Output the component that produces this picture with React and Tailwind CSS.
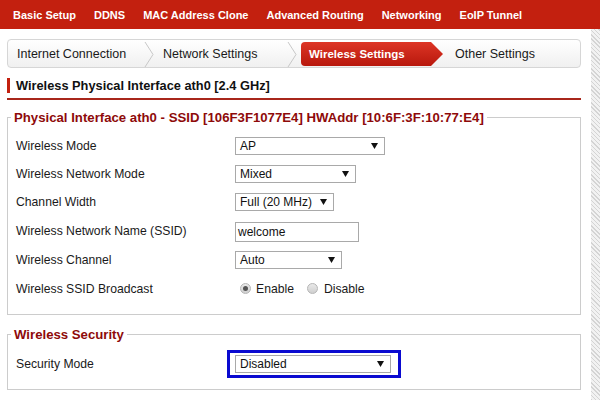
import React from 'react'

const font = { fontFamily: '"Liberation Sans", Arial, sans-serif' }

const menu = ['Basic Setup', 'DDNS', 'MAC Address Clone', 'Advanced Routing', 'Networking', 'EoIP Tunnel']

function Chevron() {
  return (
    <svg width="12" height="27" viewBox="0 0 12 27" className="shrink-0">
      <path d="M2 1 L10 13.5 L2 26" fill="none" stroke="#c8c8c8" strokeWidth="1" />
    </svg>
  )
}

function FakeSelect({ value, width }) {
  return (
    <div
      className="h-[18px] border border-[#a9a9a9] bg-white flex items-center justify-between pl-[4px] pr-[6px] text-[12px] text-[#111]"
      style={{ width }}
    >
      <span>{value}</span>
      <svg width="7" height="6" viewBox="0 0 7 6">
        <path d="M0 0 H7 L3.5 6 Z" fill="#111" />
      </svg>
    </div>
  )
}

function Radio({ checked }) {
  return (
    <span className="w-[11px] h-[11px] rounded-full border border-[#b5b5b5] bg-[linear-gradient(#e9e9e9,#cfcfcf)] flex items-center justify-center">
      {checked && <span className="w-[5px] h-[5px] rounded-full bg-[#555]" />}
    </span>
  )
}

function Row({ label, children, h = 'h-[28px]' }) {
  return (
    <div className={'flex items-center ' + h}>
      <div className="w-[219px] shrink-0 text-[12.2px] text-[#1a1a1a]">{label}</div>
      {children}
    </div>
  )
}

export default function App() {
  return (
    <div className="w-[600px] h-[400px] overflow-hidden bg-white" style={font}>
      {/* top menu */}
      <div className="h-[29px] pt-[1px] bg-[#c3200f] flex items-center pl-[13px] gap-[18px] text-white font-bold text-[11px]">
        {menu.map((m) => (
          <span key={m}>{m}</span>
        ))}
      </div>

      <div className="flex h-[371px]">
        <div className="flex-1 pl-[7px] pr-[10px]">
          {/* wizard steps */}
          <div className="mt-[10px] h-[29px] pt-[1px] rounded-[4px] border border-[#d6d6d6] bg-[linear-gradient(#ffffff,#f0f0f0)] flex items-center text-[12.5px] text-[#1a1a1a]">
            <span className="w-[135px] shrink-0 pl-[9px]">Internet Connection</span>
            <Chevron />
            <span className="w-[131px] shrink-0 pl-[8px]">Network Settings</span>
            <Chevron />
            <div className="ml-[3px] h-[24px] w-[142px] shrink-0 relative">
              <svg width="142" height="24" viewBox="0 0 142 24" className="absolute inset-0">
                <defs>
                  <linearGradient id="rg" x1="0" y1="0" x2="0" y2="1">
                    <stop offset="0" stopColor="#dd3525" />
                    <stop offset="1" stopColor="#b8180d" />
                  </linearGradient>
                </defs>
                <path d="M4 0 H130 L142 12 L130 24 H4 Q0 24 0 20 V4 Q0 0 4 0 Z" fill="url(#rg)" />
              </svg>
              <span className="relative pl-[8px] leading-[24px] text-white font-bold text-[11.5px]">Wireless Settings</span>
            </div>
            <span className="pl-[12px]">Other Settings</span>
          </div>

          {/* section header */}
          <div className="mt-[10px] flex items-center h-[15px]">
            <div className="w-[3px] h-[15px] bg-[#c3200f]" />
            <span className="ml-[6px] mt-[1px] font-bold text-[12.8px] text-[#111]">Wireless Physical Interface ath0 [2.4 GHz]</span>
          </div>
          <div className="mt-[5px] h-[2px] bg-[#a8261b]" />

          {/* physical interface */}
          <fieldset className="mt-[10px] border border-[#cccccc] pl-[8px] pr-[8px] pb-[11px]">
            <legend className="ml-[-5px] px-[3px] font-bold text-[13.2px] text-[#8e0a0a] leading-[15px]">
              Physical Interface ath0 - SSID [106F3F1077E4] HWAddr [10:6F:3F:10:77:E4]
            </legend>
            <div className="pt-[7px]">
              <Row label="Wireless Mode">
                <FakeSelect value="AP" width={150} />
              </Row>
              <Row label="Wireless Network Mode">
                <FakeSelect value="Mixed" width={121} />
              </Row>
              <Row label="Channel Width">
                <FakeSelect value="Full (20 MHz)" width={99} />
              </Row>
              <Row label="Wireless Network Name (SSID)" h="h-[30px] pt-[1px]">
                <div className="w-[124px] h-[20px] border border-[#a9a9a9] bg-white flex items-center pl-[2px] text-[12px] text-[#111]">
                  welcome
                </div>
              </Row>
              <Row label="Wireless Channel" h="h-[28px]">
                <FakeSelect value="Auto" width={107} />
              </Row>
              <Row label="Wireless SSID Broadcast" h="h-[29px] pt-[1px]">
                <div className="flex items-center text-[12.2px] text-[#1a1a1a] pl-[5px]">
                  <Radio checked />
                  <span className="ml-[5px]">Enable</span>
                  <span className="ml-[13px]"><Radio /></span>
                  <span className="ml-[6px]">Disable</span>
                </div>
              </Row>
            </div>
          </fieldset>

          {/* security */}
          <fieldset className="mt-[12px] border border-[#cccccc] pl-[8px] pr-[8px] pb-[11px]">
            <legend className="ml-[-5px] px-[3px] font-bold text-[13.2px] text-[#8e0a0a] leading-[15px]">
              Wireless Security
            </legend>
            <div className="pt-[8px]">
              <div className="flex items-center h-[28px]">
                <div className="w-[219px] shrink-0 text-[12.2px] text-[#1a1a1a]">Security Mode</div>
                <div className="ml-[-8px] border-[3px] border-[#0a0ad0] pl-[5px] pr-[7px] py-[2px]">
                  <FakeSelect value="Disabled" width={156} />
                </div>
              </div>
            </div>
          </fieldset>
        </div>
        <div className="w-[9px] shrink-0 bg-[repeating-linear-gradient(45deg,#d4d4d4_0px,#d4d4d4_1px,#f2f2f2_1px,#f2f2f2_3px)]" />
      </div>
    </div>
  )
}
